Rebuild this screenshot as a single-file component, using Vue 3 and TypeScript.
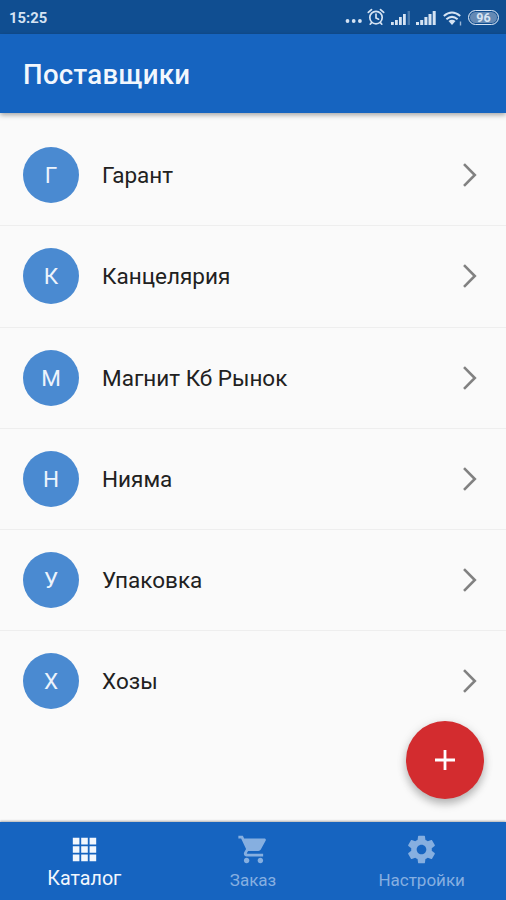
<script setup lang="ts">
interface Supplier {
  name: string
}

const suppliers: Supplier[] = [
  { name: 'Гарант' },
  { name: 'Канцелярия' },
  { name: 'Магнит Кб Рынок' },
  { name: 'Нияма' },
  { name: 'Упаковка' },
  { name: 'Хозы' },
]
</script>

<template>
  <div class="screen">
    <div class="status">
      <span class="clock">15:25</span>
      <div class="indicators">
        <svg class="dots" width="18" height="6" viewBox="0 0 18 6" fill="currentColor">
          <circle cx="2.500" cy="3" r="1.900" />
          <circle cx="8.700" cy="3" r="1.900" />
          <circle cx="14.900" cy="3" r="1.900" />
        </svg>
        <svg class="alarm" width="18" height="18" viewBox="0 0 18 18" fill="none" stroke="currentColor" stroke-width="1.700" stroke-linecap="round">
          <circle cx="9" cy="9.600" r="6.200" />
          <path d="M9 6.200v3.700l2.600 1.300M1.300 4.400 4.500 1.600M16.700 4.400 13.500 1.600M4.600 14.600l-1.400 1.600M13.400 14.600l1.400 1.600" />
        </svg>
        <svg class="signal" width="20" height="16" viewBox="0 0 20 16" fill="currentColor">
          <path d="M0 12h2.800v3H0zM4 10h2.800v5H4zM8 7h2.800v8H8zM12 4h2.800v11H12z" />
          <path d="M16.600 1H19v14h-2.400z" opacity=".3" />
        </svg>
        <svg class="signal" width="20" height="16" viewBox="0 0 20 16" fill="currentColor">
          <path d="M0 12h3v3H0zM4.200 10h3v5h-3zM8.400 7h3v8h-3zM12.500 4h3v11h-3zM16.700 1h3v14h-3z" />
        </svg>
        <svg class="wifi" width="20" height="17" viewBox="0 0 20 17" fill="none" stroke="currentColor" stroke-width="2">
          <path d="M.8 6q8.200-7 16.400 0M3.400 9.200q5.600-4.700 11.200 0" />
          <path d="M5.500 11q3.500-2.500 7 0L9 15z" fill="currentColor" stroke="none" />
          <path d="M17.500 11.500v4" stroke-width="1.400" opacity=".7" />
        </svg>
        <span class="battery">96</span>
      </div>
    </div>

    <header class="appbar">
      <h1>Поставщики</h1>
    </header>

    <main class="content">
      <ul class="list">
        <li v-for="item in suppliers" :key="item.name" class="row">
          <span class="avatar">{{ item.name.charAt(0) }}</span>
          <span class="name">{{ item.name }}</span>
          <svg class="chevron" width="16" height="26" viewBox="0 0 16 26" fill="none" stroke="currentColor" stroke-width="2.600">
            <path d="M2 2.200 12.800 13 2 23.800" />
          </svg>
        </li>
      </ul>
      <button class="fab" aria-label="Добавить">
        <svg width="22" height="22" viewBox="0 0 22 22" fill="currentColor">
          <path d="M9.600 1h2.800v8.600H21v2.800h-8.600V21H9.600v-8.600H1V9.600h8.600z" />
        </svg>
      </button>
    </main>

    <nav class="tabs">
      <a class="tab active">
        <svg viewBox="0 0 24 24" fill="currentColor">
          <path d="M3.500 3.500h4.800v4.800H3.500zM9.600 3.500h4.800v4.800H9.600zM15.700 3.500h4.800v4.800h-4.800zM3.500 9.600h4.800v4.800H3.500zM9.600 9.600h4.800v4.800H9.600zM15.700 9.600h4.800v4.800h-4.800zM3.500 15.700h4.800v4.800H3.500zM9.600 15.700h4.800v4.800H9.600zM15.700 15.700h4.800v4.800h-4.800z" />
        </svg>
        <span>Каталог</span>
      </a>
      <a class="tab">
        <svg viewBox="0 0 24 24" fill="currentColor">
          <path d="M7 18c-1.100 0-1.990.9-1.990 2S5.900 22 7 22s2-.9 2-2-.9-2-2-2zM1 2v2h2l3.600 7.590-1.350 2.450c-.16.28-.25.61-.25.960 0 1.100.9 2 2 2h12v-2H7.420c-.14 0-.25-.11-.25-.25l.03-.12.900-1.630h7.450c.75 0 1.410-.41 1.750-1.030l3.580-6.490c.08-.14.12-.31.12-.48 0-.55-.45-1-1-1H5.210l-.94-2H1zm16 16c-1.100 0-1.990.9-1.990 2s.89 2 1.990 2 2-.9 2-2-.9-2-2-2z" />
        </svg>
        <span>Заказ</span>
      </a>
      <a class="tab">
        <svg viewBox="0 0 24 24" fill="currentColor">
          <path d="M19.430 12.980c.04-.32.07-.64.07-.98s-.03-.66-.07-.98l2.110-1.650c.19-.15.24-.42.12-.64l-2-3.460c-.12-.22-.39-.3-.61-.22l-2.490 1c-.52-.4-1.080-.73-1.690-.98l-.38-2.650C14.460 2.180 14.250 2 14 2h-4c-.25 0-.46.18-.49.42l-.38 2.650c-.61.25-1.170.59-1.690.98l-2.490-1c-.23-.09-.49 0-.61.22l-2 3.460c-.13.22-.07.49.12.64l2.110 1.650c-.04.32-.07.65-.07.98s.03.66.07.98l-2.110 1.650c-.19.15-.24.42-.12.640l2 3.460c.12.22.39.3.61.22l2.490-1c.52.4 1.080.73 1.690.98l.38 2.650c.03.24.24.42.49.42h4c.25 0 .46-.18.49-.42l.38-2.650c.61-.25 1.170-.59 1.690-.98l2.490 1c.23.09.49 0 .61-.22l2-3.460c.12-.22.07-.49-.12-.640l-2.110-1.650zM12 15.500c-1.930 0-3.500-1.570-3.500-3.500s1.570-3.500 3.500-3.500 3.500 1.570 3.500 3.500-1.570 3.500-3.500 3.500z" />
        </svg>
        <span>Настройки</span>
      </a>
    </nav>
  </div>
</template>

<style>
body {
  margin: 0;
  background: #fafafa;
}
</style>

<style scoped>
.screen {
  display: flex;
  flex-direction: column;
  width: 506px;
  height: 900px;
  overflow: hidden;
  background: #fafafa;
  color: #212121;
  font-family: Roboto, "Noto Sans", sans-serif;
}
.status {
  display: flex;
  justify-content: space-between;
  align-items: center;
  box-sizing: border-box;
  height: 34px;
  padding: 1px 7px 0 9px;
  background: #104e91;
  color: #d5e3f3;
}
.clock {
  font-size: 14.800px;
  font-weight: 700;
  line-height: 18px;
}
.indicators {
  display: flex;
  align-items: center;
}
.dots {
  margin: 7px 4px 0 0;
}
.alarm {
  margin: 0 6px 1px 0;
}
.signal {
  margin: 1px 5px 0 0;
}
.wifi {
  margin: 1px 5px 0 2px;
}
.battery {
  box-sizing: border-box;
  width: 31px;
  height: 15px;
  margin-bottom: 1px;
  border: 1.500px solid currentColor;
  border-radius: 8px;
  background: #6489b4;
  box-shadow: inset 0 0 0 1px #104e91;
  font-size: 12.500px;
  font-weight: 700;
  line-height: 13px;
  text-align: center;
}
.appbar {
  position: relative;
  display: flex;
  align-items: center;
  height: 79px;
  padding-left: 23px;
  background: #1664c0;
  box-shadow: 0 2px 5px rgba(0, 0, 0, 0.35);
}
h1 {
  margin: 0;
  padding-top: 3px;
  color: #f2f7fd;
  font-size: 27.600px;
  font-weight: 500;
  line-height: 34px;
  letter-spacing: 0.300px;
}
.content {
  position: relative;
  flex: 1;
}
.list {
  margin: 0;
  padding: 12px 0 0;
  list-style: none;
}
.row {
  display: flex;
  align-items: center;
  box-sizing: border-box;
  height: 101.250px;
  padding: 0 28px 0 23px;
  border-bottom: 1.500px solid #eeeeee;
}
.row:last-child {
  border-bottom-color: transparent;
}
.avatar {
  width: 56px;
  height: 56px;
  border-radius: 50%;
  background: #4a8ad1;
  color: #edf4fc;
  font-size: 22.500px;
  line-height: 57px;
  text-align: center;
}
.name {
  flex: 1;
  margin-left: 23px;
  font-size: 22.500px;
  line-height: 28px;
}
.chevron {
  color: #818181;
}
.fab {
  position: absolute;
  right: 22px;
  bottom: 23px;
  display: flex;
  align-items: center;
  justify-content: center;
  width: 78px;
  height: 78px;
  padding: 0;
  border: 0;
  border-radius: 50%;
  background: #d32c2f;
  color: #fff;
  box-shadow: 0 5px 8px rgba(0, 0, 0, 0.25), 0 1px 12px rgba(0, 0, 0, 0.08);
}
.tabs {
  display: flex;
  height: 78px;
  background: #1664c0;
  box-shadow: 0 -1px 2px rgba(0, 0, 0, 0.3);
}
.tab {
  display: flex;
  flex: 1;
  flex-direction: column;
  align-items: center;
  color: #86afe0;
  font-size: 17px;
  line-height: 22px;
}
.tab svg {
  width: 33px;
  height: 33px;
  margin: 11px 0 3px;
}
.active {
  color: #f2f7fd;
  font-size: 19.700px;
}
.active svg {
  margin-bottom: 2px;
}
</style>
